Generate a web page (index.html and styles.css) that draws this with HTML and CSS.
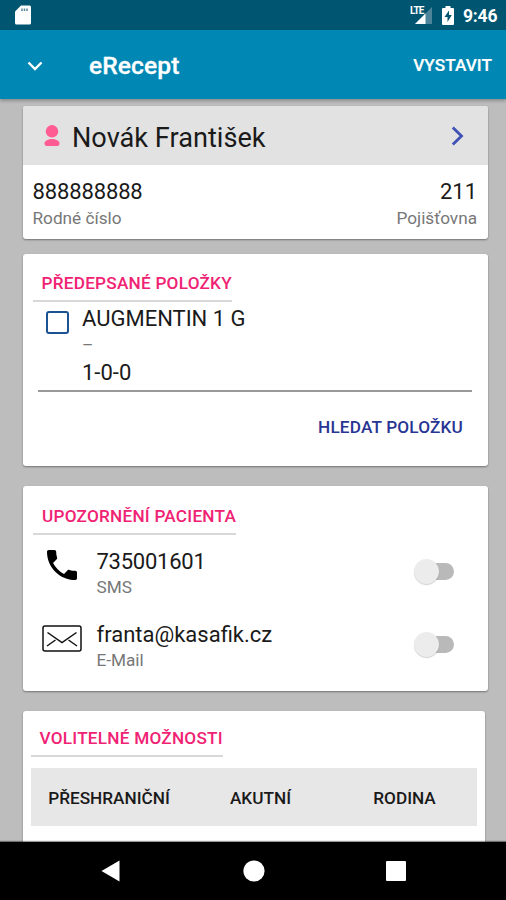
FILE: index.html
```html
<!DOCTYPE html>
<html lang="cs">
<head>
<meta charset="utf-8">
<title>eRecept</title>
<link rel="stylesheet" href="styles.css">
</head>
<body>
<div class="screen">
  <div class="status">
    <svg class="sd" width="16" height="20" viewBox="0 0 16 20"><path d="M6 .5h8.500Q16 .5 16 2v16q0 1.500-1.500 1.500h-13Q0 19.500 0 18V6.500z" fill="#fff"/><path d="M7 3.500v2.500M9.500 3.500v2.500M12 3.500v2.500" stroke="#56899a" stroke-width="1.500"/></svg>
    <div class="status-right">
      <div class="signal"><svg width="24" height="19" viewBox="0 0 24 19"><path d="M22 1v17H5z" fill="#4d8499"/><path d="M15.500 7.500V18H5z" fill="#fff"/></svg><span class="lte">LTE</span></div>
      <svg class="battery" width="12" height="19" viewBox="0 0 12 19"><path d="M3.500 0h5v2H11q1 0 1 1v15q0 1-1 1H1q-1 0-1-1V3q0-1 1-1h2.500z" fill="#fff"/><path d="M7 4.500L2.500 11H5.500v5L9.800 9H7z" fill="#005570"/></svg>
      <span class="time">9:46</span>
    </div>
  </div>
  <header class="bar">
    <svg class="down" width="16" height="10" viewBox="0 0 16 10"><path d="M1.500 1.500L8 8l6.500-6.500" fill="none" stroke="#fff" stroke-width="2.400"/></svg>
    <h1>eRecept</h1>
    <span class="issue">VYSTAVIT</span>
  </header>
  <main>
    <section class="card patient">
      <div class="patient-head">
        <svg width="16" height="22" viewBox="0 0 16 22"><circle cx="8" cy="6.300" r="6.200" fill="#ff5c93"/><path d="M.5 18.500C.5 15.500 4.500 14 8 14s7.500 1.500 7.500 4.500Q15.500 21 13 21H3Q.5 21 .5 18.500z" fill="#ff5c93"/></svg>
        <span class="name">Novák František</span>
        <svg class="next" width="13" height="20" viewBox="0 0 13 20"><path d="M1.800 1.500L10.500 10l-8.700 8.500" fill="none" stroke="#3f51b5" stroke-width="2.800"/></svg>
      </div>
      <div class="patient-info">
        <div><div class="big num">888888888</div><div class="small">Rodné číslo</div></div>
        <div class="right"><div class="big">211</div><div class="small ins">Pojišťovna</div></div>
      </div>
    </section>

    <section class="card items">
      <h2>PŘEDEPSANÉ POLOŽKY</h2>
      <div class="item">
        <span class="check"></span>
        <div class="item-text"><div class="big drug">AUGMENTIN 1 G</div><div class="small dash">–</div><div class="big dose">1-0-0</div></div>
      </div>
      <div class="search">HLEDAT POLOŽKU</div>
    </section>

    <section class="card notify">
      <h2>UPOZORNĚNÍ PACIENTA</h2>
      <div class="contact">
        <div class="icon"><svg class="phone" width="30" height="30" viewBox="3 3 18 18"><path d="M6.620 10.790c1.440 2.830 3.760 5.140 6.590 6.590l2.200-2.200c.27-.27.67-.36 1.020-.24 1.120.37 2.330.57 3.570.57.55 0 1 .45 1 1V20c0 .55-.45 1-1 1-9.390 0-17-7.610-17-17 0-.55.45-1 1-1h3.500c.55 0 1 .45 1 1 0 1.250.2 2.450.57 3.570.11.35.03.74-.25 1.020l-2.200 2.200z"/></svg></div>
        <div class="contact-text"><div class="big tel">735001601</div><div class="small">SMS</div></div>
        <span class="toggle"><i></i></span>
      </div>
      <div class="contact mail">
        <div class="icon"><svg width="40" height="27" viewBox="0 0 40 27" fill="none" stroke="#111" stroke-width="1.500"><rect x="1" y="1" width="38" height="25" rx="2"/><path d="M5.500 7.500L20 17.500 34.500 7.500M5 21l8.500-6M35 21l-8.500-6"/></svg></div>
        <div class="contact-text"><div class="big email">franta@kasafik.cz</div><div class="small">E-Mail</div></div>
        <span class="toggle"><i></i></span>
      </div>
    </section>

    <section class="card options">
      <h2>VOLITELNÉ MOŽNOSTI</h2>
      <div class="tabs"><span>PŘESHRANIČNÍ</span><span>AKUTNÍ</span><span>RODINA</span></div>
    </section>
  </main>
  <nav>
    <svg width="20" height="22" viewBox="0 0 20 22"><path d="M18.500 .5v21L.5 11z" fill="#fff"/></svg>
    <svg width="22" height="22" viewBox="0 0 22 22"><circle cx="11" cy="11" r="10.600" fill="#fff"/></svg>
    <svg width="20" height="20" viewBox="0 0 20 20"><rect width="20" height="20" rx="1" fill="#fff"/></svg>
  </nav>
</div>
</body>
</html>
```
FILE: styles.css
```css
* { box-sizing: border-box; }
body { margin: 0; font-family: Roboto, "Liberation Sans", sans-serif; color: #1a1a1a; }
svg { display: block; flex: none; }
h1, h2 { margin: 0; font-weight: 500; }
.screen { width: 506px; height: 900px; overflow: hidden; display: flex; flex-direction: column; background: #bdbdbd; }

.status { height: 30px; flex: none; background: #005570; display: flex; justify-content: space-between; padding: 5px 9px 0 15px; }
.status-right { display: flex; color: #fff; }
.signal { position: relative; margin: 1px 8px 0 0; }
.lte { position: absolute; left: 0; top: 0; font-size: 10px; line-height: 9px; font-weight: 700; letter-spacing: -.9px; }
.battery { margin: .5px 9px 0 0; }
.time { font-size: 17.500px; line-height: 22px; font-weight: 700; width: 34px; letter-spacing: -.2px; }

.bar { height: 69px; flex: none; background: #0087b4; color: #fff; display: flex; align-items: center; padding: 2px 14px 0 27px; position: relative; box-shadow: 0 2px 3px rgba(0,0,0,.25); }
.bar h1 { font-size: 24.600px; line-height: 30px; margin: 0 0 0 46px; letter-spacing: .08px; -webkit-text-stroke: .3px #fff; }
.issue { margin: -2px 0 0 auto; font-size: 17.200px; font-weight: 500; letter-spacing: .05px; -webkit-text-stroke: .2px #fff; }

main { flex: 1; min-height: 0; overflow: hidden; padding: 7px 18.500px 0 22.500px; }
.card { background: #fff; border-radius: 3px; box-shadow: 0 1px 2px rgba(0,0,0,.4); overflow: hidden; }
.big { font-size: 22px; line-height: 26px; }
.small { font-size: 17.200px; line-height: 20px; color: #777; }
h2 { width: max-content; font-size: 17.200px; line-height: 20px; letter-spacing: .23px; color: #f02273; border-bottom: 2px solid #d8d8d8; }

.patient { height: 132.500px; }
.patient-head { height: 59px; background: #e2e2e2; display: flex; align-items: center; padding: 1px 23.500px 0 21.500px; }
.name { font-size: 27.150px; line-height: 32px; margin: 3px 0 0 12px; }
.next { margin-left: auto; }
.patient-info { display: flex; justify-content: space-between; padding: 14px 10.500px 0 10px; }
.patient-info .small { margin-top: 2.500px; }
.num { letter-spacing: -.13px; }
.right { text-align: right; }

.items { height: 212.500px; margin-top: 15px; padding: 19.500px 15.500px 0 10px; }
.items h2 { padding: 0 0 7px 9px; }
.item { display: flex; margin-left: 5px; height: 90px; border-bottom: 2px solid #999; padding: 3.500px 0 0 8px; }
.check { width: 23px; height: 23px; margin-top: 5px; border: 2.500px solid #1b5292; border-radius: 3px; flex: none; }
.item-text { margin-left: 13.500px; }
.dash { margin: 3px 0 5px; }
.search { text-align: right; margin: 25px 9px 0 0; font-size: 17.200px; line-height: 20px; font-weight: 500; letter-spacing: .17px; color: #283593; }

.notify { height: 204.500px; margin-top: 20px; padding: 20px 33.500px 0 10px; }
.notify h2 { padding: 0 0 6.500px 9.500px; }
.contact { display: flex; height: 73px; padding-top: 13px; }
.icon { width: 64px; padding: 2.500px 0 0 14px; }
.mail .icon { padding: 4.500px 0 0 9px; }
.contact-text .small { margin-top: 2.500px; }
.contact-text .big { padding-top: 1px; }
.tel { letter-spacing: -.25px; }
.toggle { position: relative; width: 34px; height: 17px; margin: 15.500px 0 0 auto; border-radius: 9px; background: #b9b9b9; }
.toggle i { position: absolute; left: -6px; top: -4px; width: 25px; height: 25px; border-radius: 50%; background: #ececec; box-shadow: 0 1px 1px rgba(0,0,0,.18); }

.options { height: 180px; margin: 20px 2.500px 0 0; padding: 17.500px 8px 0; }
.options h2 { padding: 0 0 7px 9px; }
.tabs { height: 58px; margin-top: 10.500px; background: #e7e7e7; display: grid; grid-template-columns: 157px 146px 142px; align-items: center; text-align: center; font-size: 17.200px; font-weight: 500; padding-top: 2px; }

nav { height: 58px; flex: none; background: #000; display: flex; align-items: center; justify-content: space-between; padding: 0 100px 0 101px; position: relative; box-shadow: 0 -1px 1px rgba(0,0,0,.4); }
```
